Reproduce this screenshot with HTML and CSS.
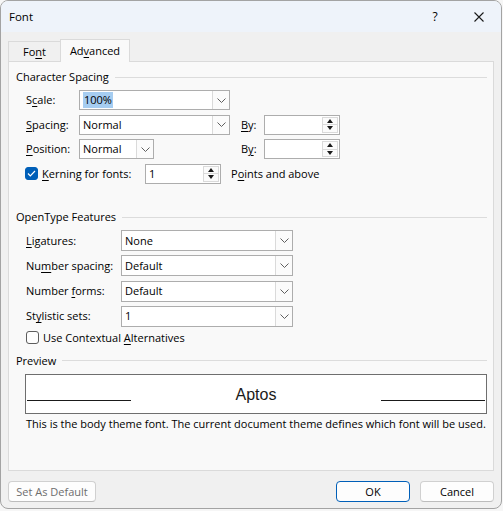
FILE: index.html
```html
<!DOCTYPE html>
<html>

<head>
    <title>Font</title>

    <link rel="stylesheet" href="styles.css">

</head>

<body>
    <div class="window">
        <div class="titlebar">
            <span class="title">Font</span>
            <span class="caption-btn help">?</span>
            <span class="caption-btn">
                <svg width="10" height="10" viewBox="0 0 10 10">
                    <path d="M0.5 0.5L9.5 9.5M9.5 0.5L0.5 9.5" stroke="#1a1a1a" stroke-width="1.1" fill="none"/>
                </svg>
            </span>
        </div>

        <div class="content">
            <div class="tabs">
                <div class="tab">Fo<u>n</u>t</div>
                <div class="tab active">Ad<u>v</u>anced</div>
            </div>

            <div class="panel">
                <div class="group-title">Character Spacing</div>

                <div class="spacing-grid">
                    <span>S<u>c</u>ale:</span>
                    <div class="combo wide">
                        <span class="value"><span class="selected">100%</span></span>
                        <span class="drop"><svg width="9" height="5" viewBox="0 0 9 5"><polyline points="0.5,0.5 4.5,4.5 8.5,0.5" fill="none" stroke="#5f5f5f"/></svg></span>
                    </div>
                    <span></span>
                    <span></span>

                    <span><u>S</u>pacing:</span>
                    <div class="combo wide">
                        <span class="value">Normal</span>
                        <span class="drop"><svg width="9" height="5" viewBox="0 0 9 5"><polyline points="0.5,0.5 4.5,4.5 8.5,0.5" fill="none" stroke="#5f5f5f"/></svg></span>
                    </div>
                    <span><u>B</u>y:</span>
                    <div class="spin">
                        <span class="value"></span>
                        <span class="arrows"><span class="up"></span><span class="down"></span></span>
                    </div>

                    <span><u>P</u>osition:</span>
                    <div class="combo short">
                        <span class="value">Normal</span>
                        <span class="drop"><svg width="9" height="5" viewBox="0 0 9 5"><polyline points="0.5,0.5 4.5,4.5 8.5,0.5" fill="none" stroke="#5f5f5f"/></svg></span>
                    </div>
                    <span>B<u>y</u>:</span>
                    <div class="spin">
                        <span class="value"></span>
                        <span class="arrows"><span class="up"></span><span class="down"></span></span>
                    </div>
                </div>

                <div class="kerning-row">
                    <span class="check checked">
                        <svg width="9" height="7" viewBox="0 0 9 7"><polyline points="1,3.5 3.3,5.8 8,1" fill="none" stroke="#fff" stroke-width="1.2"/></svg>
                    </span>
                    <span class="kerning-label"><u>K</u>erning for fonts:</span>
                    <div class="spin">
                        <span class="value">1</span>
                        <span class="arrows"><span class="up"></span><span class="down"></span></span>
                    </div>
                    <span class="points">P<u>o</u>ints and above</span>
                </div>

                <div class="group-title opentype">OpenType Features</div>

                <div class="opentype-grid">
                    <span><u>L</u>igatures:</span>
                    <div class="combo long">
                        <span class="value">None</span>
                        <span class="drop"><svg width="9" height="5" viewBox="0 0 9 5"><polyline points="0.5,0.5 4.5,4.5 8.5,0.5" fill="none" stroke="#5f5f5f"/></svg></span>
                    </div>

                    <span>Nu<u>m</u>ber spacing:</span>
                    <div class="combo long">
                        <span class="value">Default</span>
                        <span class="drop"><svg width="9" height="5" viewBox="0 0 9 5"><polyline points="0.5,0.5 4.5,4.5 8.5,0.5" fill="none" stroke="#5f5f5f"/></svg></span>
                    </div>

                    <span>Number <u>f</u>orms:</span>
                    <div class="combo long">
                        <span class="value">Default</span>
                        <span class="drop"><svg width="9" height="5" viewBox="0 0 9 5"><polyline points="0.5,0.5 4.5,4.5 8.5,0.5" fill="none" stroke="#5f5f5f"/></svg></span>
                    </div>

                    <span>St<u>y</u>listic sets:</span>
                    <div class="combo long">
                        <span class="value">1</span>
                        <span class="drop"><svg width="9" height="5" viewBox="0 0 9 5"><polyline points="0.5,0.5 4.5,4.5 8.5,0.5" fill="none" stroke="#5f5f5f"/></svg></span>
                    </div>
                </div>

                <div class="contextual-row">
                    <span class="check"></span>
                    <span>Use Contextual <u>A</u>lternatives</span>
                </div>

                <div class="group-title preview-title">Preview</div>

                <div class="preview">
                    <span class="baseline"></span>
                    <span class="sample">Aptos</span>
                    <span class="baseline"></span>
                </div>

                <div class="description">This is the body theme font. The current document theme defines which font will be used.</div>
            </div>

            <div class="footer">
                <button class="disabled">Set As Default</button>
                <span class="spacer"></span>
                <button class="default">OK</button>
                <button>Cancel</button>
            </div>
        </div>
    </div>
</body>

</html>
```

FILE: styles.css
```css
* {
    box-sizing: border-box;
}

body {
    margin: 0;
    background: #f6f6f6;

    font-family: "Segoe UI", "Open Sans", sans-serif;
    font-size: 11px;
    line-height: 16px;
    color: #000;
    white-space: nowrap;
}

u {
    text-underline-offset: 2px;
}

.window {
    display: flex;
    flex-direction: column;

    width: 502px;
    height: 509px;

    background: #f0f0f0;
    border: 1px solid #a3a3a3;
    border-radius: 8px;
    overflow: hidden;
}

.titlebar {
    display: flex;
    align-items: center;

    height: 31px;

    background: #eef3fa;
}

.title {
    flex: 1;
    padding-left: 8px;

    font-size: 11.5px;
}

.caption-btn {
    display: flex;
    justify-content: center;
    align-items: center;

    width: 44px;
    height: 31px;
}

.help {
    font-size: 12px;
}

.content {
    display: flex;
    flex-direction: column;

    padding: 7px 7px 0 7px;
}

.tabs {
    display: flex;
    align-items: flex-end;

    height: 22px;
}

.tab {
    display: flex;
    justify-content: center;
    align-items: center;

    width: 52px;
    height: 20px;
    padding-top: 1px;

    border: 1px solid #dadada;
    border-bottom: none;
    border-right: none;
}

.tab.active {
    position: relative;
    z-index: 1;

    width: 70px;
    height: 23px;
    margin-bottom: -1px;
    padding-top: 0;
    padding-bottom: 1px;

    background: #f9f9f9;
    border-right: 1px solid #dadada;
}

.panel {
    height: 410px;
    padding: 7px 6px 0 7px;

    background: #f9f9f9;
    border: 1px solid #dadada;
}

.group-title {
    display: flex;
    align-items: center;

    height: 16px;
}

.group-title::after {
    content: "";
    flex: 1;

    height: 1px;
    margin-left: 6px;

    background: #dcdcdc;
}

.spacing-grid {
    display: grid;
    grid-template-columns: 53px 162px 23px 76px;
    grid-auto-rows: 20px;
    row-gap: 4.5px;
    align-items: center;

    margin: 5px 0 0 10px;
}

.combo {
    display: flex;

    height: 20px;

    background: #fff;
    border: 1px solid #adadad;
}

.combo.wide {
    width: 151px;
}

.combo.short {
    width: 75px;
}

.combo.long {
    width: 172px;
    height: 21px;
}

.combo .value {
    flex: 1;
    display: flex;
    align-items: center;

    padding-left: 3px;
}

.selected {
    padding: 0 1px;

    background: #a6cdf1;
}

.drop {
    display: flex;
    justify-content: center;
    align-items: center;

    width: 17px;

    border-left: 1px solid #dadada;
    background: #fbfbfb;
}

.spin {
    display: flex;

    width: 76px;
    height: 20px;

    background: #fff;
    border: 1px solid #adadad;
}

.spin .value {
    flex: 1;
    display: flex;
    align-items: center;

    padding-left: 3px;
}

.arrows {
    display: flex;
    flex-direction: column;

    width: 16px;
    margin: 1px 1px 1px 0;
}

.arrows span {
    flex: 1;
    display: flex;
    justify-content: center;
    align-items: center;

    border: 1px solid #dadada;
    background: #fbfbfb;
}

.arrows .down {
    border-top: none;
}

.arrows .up::before {
    content: "";
    border-left: 3px solid transparent;
    border-right: 3px solid transparent;
    border-bottom: 4px solid #1a1a1a;
}

.arrows .down::before {
    content: "";
    border-left: 3px solid transparent;
    border-right: 3px solid transparent;
    border-top: 4px solid #1a1a1a;
}

.kerning-row {
    display: flex;
    align-items: center;

    height: 20px;
    margin: 4.5px 0 0 9px;
}

.check {
    display: flex;
    justify-content: center;
    align-items: center;

    width: 13px;
    height: 13px;

    background: #fdfdfd;
    border: 1px solid #5c5c5c;
    border-radius: 3px;
}

.check.checked {
    background: #005fb8;
    border-color: #005fb8;
}

.kerning-label {
    width: 103px;
    margin-left: 4px;
}

.points {
    margin-left: 10px;
}

.opentype {
    margin-top: 25.5px;
}

.opentype-grid {
    display: grid;
    grid-template-columns: 95px 172px;
    grid-auto-rows: 21px;
    row-gap: 4.3px;
    align-items: center;

    margin: 5px 0 0 10px;
}

.contextual-row {
    display: flex;
    align-items: center;
    gap: 4px;

    height: 16px;
    margin: 3px 0 0 10px;
}

.preview-title {
    margin-top: 7px;
}

.preview {
    display: flex;
    align-items: flex-start;

    height: 40px;
    margin: 5px 0 0 9px;
    padding: 0 1px;

    background: #fff;
    border: 1px solid #6e6e6e;
}

.baseline {
    width: 104px;
    height: 1px;
    margin-top: 25px;

    background: #1a1a1a;
}

.sample {
    flex: 1;

    margin-top: 11px;

    font-family: "Liberation Sans", Arial, sans-serif;
    font-size: 16px;
    line-height: 18px;
    text-align: center;
    color: #1a1a1a;
}

.description {
    margin: 2px 0 0 10px;
}

.footer {
    display: flex;
    gap: 10px;

    margin-top: 10px;
}

.spacer {
    flex: 1;
}

button {
    width: 74px;
    height: 21px;
    padding: 0;

    background: #fdfdfd;
    border: 1px solid #d0d0d0;
    border-bottom-color: #bcbcbc;
    border-radius: 4px;

    font-family: inherit;
    font-size: 11px;
    color: #000;
}

button.disabled {
    width: 88px;

    color: #6d6d6d;
}

button.default {
    border: 1px solid #005fb8;
}
```
